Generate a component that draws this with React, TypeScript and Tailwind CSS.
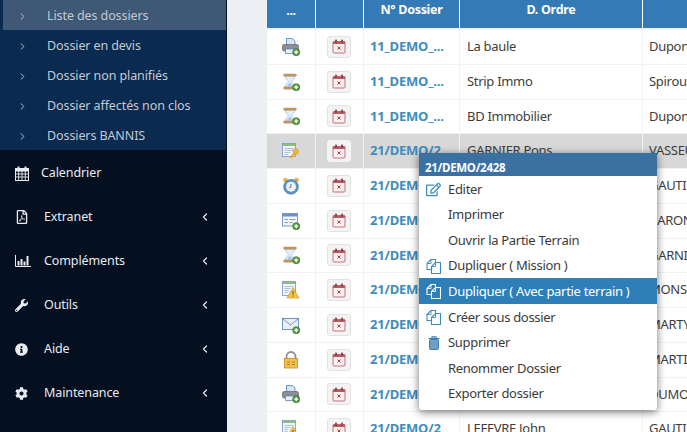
import { ChevronLeft, ChevronRight } from "lucide-react";
import { FaCog, FaInfoCircle, FaRegEdit, FaRegFilePdf, FaWrench } from "react-icons/fa";
import type { ReactNode } from "react";

const subItems = ["Liste des dossiers", "Dossier en devis", "Dossier non planifiés", "Dossier affectés non clos", "Dossiers BANNIS"];

function CalendarGlyph() {
  return (
    <svg width="14" height="15" viewBox="0 0 14 15" fill="none" stroke="currentColor">
      <rect x="0.5" y="2.5" width="13" height="12" />
      <rect x="0.5" y="2.5" width="13" height="2.5" fill="currentColor" />
      <path d="M3.5 0.5v3.5M10.5 0.5v3.5" strokeWidth="2" />
      <path d="M0.5 8h13M0.5 11h13M3.7 5v9.5M7 5v9.5M10.3 5v9.5" strokeWidth="0.9" />
    </svg>
  );
}

function BarsGlyph() {
  return (
    <svg width="16" height="12" viewBox="0 0 16 12" fill="none" stroke="currentColor">
      <path d="M0.5 0v11.5H16" />
      <path d="M3.5 10.500V6M6.5 10.500V4M9.5 10.500V6.500M12.5 10.500V1" strokeWidth="2" />
    </svg>
  );
}

const mainItems = [
  { label: "Extranet", icon: <FaRegFilePdf size={14} /> },
  { label: "Compléments", icon: <BarsGlyph /> },
  { label: "Outils", icon: <FaWrench size={13} /> },
  { label: "Aide", icon: <FaInfoCircle size={13} /> },
  { label: "Maintenance", icon: <FaCog size={13} /> },
];

function Plus() {
  return (
    <g>
      <circle cx="14.2" cy="14.2" r="3.5" fill="#56a23c" stroke="#2f6b1f" strokeWidth="0.7" />
      <path d="M12.2 14.2h4M14.2 12.2v4" stroke="#fff" strokeWidth="1.3" />
    </g>
  );
}

function Printer() {
  return (
    <svg width="18" height="18" viewBox="0 0 18 18">
      <path d="M4.5 0.5h6l2.500 2.500v6H4.5z" fill="#d6e6f7" stroke="#4a7fc0" strokeWidth="0.8" />
      <rect x="0.5" y="6.5" width="16" height="6.5" rx="1.5" fill="#8b8f94" stroke="#555" strokeWidth="0.6" />
      <rect x="3.5" y="11" width="10" height="4.5" fill="#e8eef6" stroke="#4a7fc0" strokeWidth="0.7" />
      <Plus />
    </svg>
  );
}

function Hourglass() {
  return (
    <svg width="18" height="18" viewBox="0 0 18 18">
      <path d="M3 3h10c0 3.500-3.500 4-3.500 5.500S13 11 13 14H3c0-3 3.500-4 3.500-5.500S3 6.500 3 3z" fill="#e4effb" stroke="#8db2dc" strokeWidth="0.6" />
      <path d="M5 13.500c1-2.500 2-3 3-4 1 1 2 1.500 3 4z" fill="#a9c8ea" />
      <rect x="1.5" y="1" width="13" height="2.2" rx="1.1" fill="#c49a63" stroke="#a27a45" strokeWidth="0.4" />
      <rect x="1.5" y="14" width="13" height="2.2" rx="1.1" fill="#c49a63" stroke="#a27a45" strokeWidth="0.4" />
      <Plus />
    </svg>
  );
}

function NoteKey() {
  return (
    <svg width="18" height="18" viewBox="0 0 18 18">
      <rect x="0.5" y="1.5" width="13" height="13" fill="#f3f7fc" stroke="#6f93c9" strokeWidth="0.8" />
      <rect x="1" y="2" width="12" height="2" fill="#8cc079" />
      <path d="M2.5 6.500h9M2.5 8.500h9M2.5 10.500h6M2.5 12.500h4" stroke="#9ab3d6" strokeWidth="0.8" />
      <circle cx="13.8" cy="9.5" r="2.9" fill="#eeb53c" stroke="#c98f1e" strokeWidth="0.4" />
      <path d="M12.5 11l-4 5" stroke="#e6a92f" strokeWidth="2.2" />
    </svg>
  );
}

function Clock() {
  return (
    <svg width="18" height="18" viewBox="0 0 18 18">
      <circle cx="3.5" cy="3" r="2.3" fill="#e5b23c" />
      <circle cx="14.5" cy="3" r="2.3" fill="#e5b23c" />
      <circle cx="9" cy="9.8" r="7.4" fill="#5b93cc" stroke="#3e6fa5" strokeWidth="0.6" />
      <circle cx="9" cy="9.8" r="5" fill="#eef3f8" />
      <path d="M9 6.800v3l-2 1" stroke="#555" strokeWidth="0.8" fill="none" />
    </svg>
  );
}

function FormPlus() {
  return (
    <svg width="18" height="18" viewBox="0 0 18 18">
      <rect x="0.5" y="1.5" width="15" height="12.5" fill="#f2f6fb" stroke="#5f7fb8" strokeWidth="0.8" />
      <rect x="1" y="2" width="14" height="2.5" fill="#6f8fc8" />
      <path d="M2.5 7.500h3.500M2.5 10.500h3.500M7.500 7.500h6M7.500 10.500h3" stroke="#8a9bb5" strokeWidth="1.2" />
      <Plus />
    </svg>
  );
}

function NoteWarning() {
  return (
    <svg width="18" height="18" viewBox="0 0 18 18">
      <rect x="0.5" y="0.5" width="13" height="14" fill="#f3f7fc" stroke="#6f93c9" strokeWidth="0.8" />
      <rect x="1" y="1" width="12" height="2" fill="#8cc079" />
      <path d="M2.5 5.500h9M2.5 7.500h6M2.5 9.500h4M2.5 11.500h3" stroke="#9ab3d6" strokeWidth="0.8" />
      <path d="M11 6.500l6 10.500H5z" fill="#f3c548" stroke="#c98f1e" strokeWidth="0.6" />
      <path d="M11 10v3.500M11 14.500v1.200" stroke="#704d10" strokeWidth="1" />
    </svg>
  );
}

function Mail() {
  return (
    <svg width="18" height="18" viewBox="0 0 18 18">
      <rect x="0.5" y="2.5" width="16" height="11" fill="#e9f0fa" stroke="#4f78bb" strokeWidth="0.8" />
      <path d="M0.5 2.500l8 6.500 8-6.500" fill="none" stroke="#4f78bb" strokeWidth="0.8" />
      <Plus />
    </svg>
  );
}

function Lock() {
  return (
    <svg width="18" height="18" viewBox="0 0 18 18">
      <path d="M4.5 8V5.500a4.500 4.500 0 0 1 9 0V8" fill="none" stroke="#909090" strokeWidth="1.8" />
      <rect x="2.5" y="7.5" width="13" height="9.5" fill="#f2c04e" stroke="#c98a1e" strokeWidth="0.8" />
      <path d="M5 11h3M5 13.500h3M10 11h3M10 13.500h3" stroke="#a87a22" strokeWidth="1" />
    </svg>
  );
}

function CopyGlyph() {
  return (
    <svg width="15" height="15" viewBox="0 0 15 15" fill="none" stroke="currentColor" strokeWidth="1.1">
      <path d="M9.5 3.5V0.500H5L1 4.500v6h4.500" />
      <path d="M5 0.500v4H1" strokeWidth="0.9" />
      <path d="M9.5 3.500h5v11h-9V7.500z" />
      <path d="M9.500 3.500v4h-4" strokeWidth="0.9" />
    </svg>
  );
}

function TrashGlyph() {
  return (
    <svg width="12" height="14" viewBox="0 0 12 14">
      <path d="M0.5 2.500h11M4 2.500V0.800h4v1.700" stroke="#3c7fb0" strokeWidth="1.2" fill="none" />
      <rect x="1.5" y="3.5" width="9" height="10" rx="1" fill="#6fa0c4" stroke="#3c7fb0" />
    </svg>
  );
}

const rows: { icon: ReactNode; dossier: string; ordre: string; tiers: string; active?: boolean }[] = [
  { icon: <Printer />, dossier: "11_DEMO_...", ordre: "La baule", tiers: "Dupont" },
  { icon: <Hourglass />, dossier: "11_DEMO_...", ordre: "Strip Immo", tiers: "Spirou" },
  { icon: <Hourglass />, dossier: "11_DEMO_...", ordre: "BD Immobilier", tiers: "Dupont" },
  { icon: <NoteKey />, dossier: "21/DEMO/2", ordre: "GARNIER Pons", tiers: "VASSEUR", active: true },
  { icon: <Clock />, dossier: "21/DEMO/2", ordre: "", tiers: "GAUTIER" },
  { icon: <FormPlus />, dossier: "21/DEMO/2", ordre: "", tiers: "BARON" },
  { icon: <Hourglass />, dossier: "21/DEMO/2", ordre: "", tiers: "GARNIER" },
  { icon: <NoteWarning />, dossier: "21/DEMO/2", ordre: "", tiers: "MONS I" },
  { icon: <Mail />, dossier: "21/DEMO/2", ordre: "", tiers: "MARTY" },
  { icon: <Lock />, dossier: "21/DEMO/2", ordre: "", tiers: "MARTIN" },
  { icon: <Printer />, dossier: "21/DEMO/2", ordre: "", tiers: "DUMONT" },
  { icon: <NoteWarning />, dossier: "21/DEMO/2", ordre: "LEFEVRE John", tiers: "GAUTIER" },
];

const menu: { label: string; icon?: ReactNode; active?: boolean }[] = [
  { label: "Editer", icon: <FaRegEdit size={15} /> },
  { label: "Imprimer" },
  { label: "Ouvrir la Partie Terrain" },
  { label: "Dupliquer ( Mission )", icon: <CopyGlyph /> },
  { label: "Dupliquer ( Avec partie terrain )", icon: <CopyGlyph />, active: true },
  { label: "Créer sous dossier", icon: <CopyGlyph /> },
  { label: "Supprimer", icon: <span className="ml-[2px] flex"><TrashGlyph /></span> },
  { label: "Renommer Dossier" },
  { label: "Exporter dossier" },
];

function CalendarButton({ active }: { active?: boolean }) {
  return (
    <div className={`flex h-[22px] w-[24px] items-center justify-center rounded-[3px] border bg-[#f4f4f4] ${active ? "border-[#f4f4f4]" : "border-[#e2e2e2]"}`}>
      <svg width="14" height="15" viewBox="0 0 14 15">
        <rect x="1" y="2.5" width="12" height="11.5" rx="1" fill="#fbf0ee" stroke="#b9737b" strokeWidth="1" />
        <rect x="1" y="2.5" width="12" height="2.5" fill="#bb5a5f" />
        <rect x="3" y="0.5" width="2" height="3.5" rx="0.8" fill="#93434a" />
        <rect x="9" y="0.5" width="2" height="3.5" rx="0.8" fill="#93434a" />
        <path d="M5.5 7.500l3 3M8.500 7.500l-3 3" stroke="#b03a44" strokeWidth="1" />
      </svg>
    </div>
  );
}

export default function App() {
  return (
    <div className="flex h-[432px] w-[687px] overflow-hidden bg-[#ecf0f5] font-['Noto_Sans',sans-serif] text-[13px] tracking-[-0.3px]">
      <aside className="flex w-[227px] flex-none flex-col bg-[#040f1f] text-[12.5px] tracking-[-0.1px]">
        <div className="mr-[1px] flex h-[150px] flex-none flex-col bg-[#0a2a50] text-[#c2c9d3]">
          {subItems.map((item, i) => (
            <div key={item} className={`flex h-[30px] items-center pt-[2px] ${i === 0 ? "ml-[3px] bg-[#3e5875] pl-[14px]" : "pl-[17px]"}`}>
              <ChevronRight size={11} strokeWidth={2} className="mr-[19px] flex-none" />
              <span>{item}</span>
            </div>
          ))}
        </div>
        <div className="flex h-[44px] items-center pl-[15px] pt-[2px] text-[#e8ebef]">
          <span className="mr-[12px] flex"><CalendarGlyph /></span>
          <span>Calendrier</span>
        </div>
        {mainItems.map((item) => (
          <div key={item.label} className="flex h-[44px] items-center pl-[15px] pr-[16px] pt-[2px] text-[#e8ebef]">
            <span className="flex w-[29px] flex-none items-center">{item.icon}</span>
            <span className="flex-1">{item.label}</span>
            <ChevronLeft size={12} strokeWidth={2.5} />
          </div>
        ))}
      </aside>

      <main className="relative min-w-0 flex-1 pl-[40px]">
        <div className="h-full bg-white text-[#3d3d3d]">
          <div className="flex h-[30px] border-b-2 border-[#f2f2f2] bg-[#337ab7] text-[12.5px] font-bold text-white">
            <div className="flex w-[49px] flex-none items-center justify-center border-r border-white pb-[6px]">...</div>
            <div className="w-[48px] flex-none border-r border-white" />
            <div className="flex w-[96px] flex-none items-center justify-center border-r border-white pb-[8px]">N° Dossier</div>
            <div className="flex w-[183px] flex-none items-center justify-center border-r border-white pb-[8px]">D. Ordre</div>
            <div className="flex-1" />
          </div>
          {rows.map((row, i) => (
            <div key={i} className={`flex h-[34.75px] border-b border-[#f2f2f2] ${row.active ? "bg-[#d8d8d8]" : ""}`}>
              <div className="flex w-[49px] flex-none items-center justify-center border-r border-[#f2f2f2]">{row.icon}</div>
              <div className="flex w-[48px] flex-none items-center justify-center border-r border-[#f2f2f2] pr-[1px]">
                <CalendarButton active={row.active} />
              </div>
              <div className="flex w-[96px] flex-none items-center overflow-hidden whitespace-nowrap border-r border-[#f2f2f2] pl-[6px] font-bold tracking-[-0.2px] text-[#3c8dbc]">
                {row.dossier}
              </div>
              <div className="flex w-[183px] flex-none items-center whitespace-nowrap border-r border-[#f2f2f2] pl-[7px]">{row.ordre}</div>
              <div className="flex flex-1 items-center overflow-hidden whitespace-nowrap pl-[6px]">{row.tiers}</div>
            </div>
          ))}
        </div>

        {/* context menu */}
        <div className="absolute left-[192px] top-[153px] w-[238px] rounded-b-[3px] bg-white pb-[4px] text-[#3a3a3a] shadow-[0_2px_8px_rgba(0,0,0,0.55)]">
          <div className="flex h-[23px] items-center bg-[#3b70a3] pl-[6px] pt-[6px] text-[11.5px] font-bold tracking-[-0.3px] text-white">21/DEMO/2428</div>
          {menu.map((item) => (
            <div key={item.label} className={`flex h-[25.6px] items-center pl-[7px] pt-[1px] ${item.active ? "bg-[#2e7fb8] text-white" : ""}`}>
              <span className={`flex w-[22px] flex-none items-center ${item.active ? "text-white" : "text-[#3c8dbc]"}`}>{item.icon}</span>
              <span>{item.label}</span>
            </div>
          ))}
        </div>
      </main>
    </div>
  );
}
